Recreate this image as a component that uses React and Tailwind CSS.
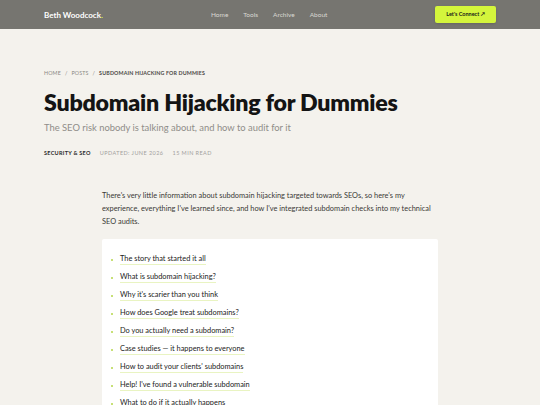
import React from "react";

const toc = [
  "The story that started it all",
  "What is subdomain hijacking?",
  "Why it's scarier than you think",
  "How does Google treat subdomains?",
  "Do you actually need a subdomain?",
  "Case studies — it happens to everyone",
  "How to audit your clients' subdomains",
  "Help! I've found a vulnerable subdomain",
  "What to do if it actually happens",
];

export default function App() {
  return (
    <div className="h-[405px] overflow-hidden bg-[#f4f2ed] text-[#1a1a1a]" style={{ fontFamily: "Lato, 'Noto Sans', sans-serif" }}>
      <header className="flex h-[29px] items-center bg-[#767570] px-[44px]">
        <div className="w-[156px] text-[8px] font-bold text-white">
          Beth Woodcock<span className="text-[#d6f542]">.</span>
        </div>
        <nav className="flex flex-1 gap-[15px] pl-[11px] text-[6.5px] text-[#d9d8d3]">
          <span>Home</span>
          <span>Tools</span>
          <span>Archive</span>
          <span>About</span>
        </nav>
        <button className="h-[17px] w-[61px] rounded-[2px] bg-[#d4f53c] text-[5.5px] font-bold text-[#1a1a1a] shadow-sm">
          Let's Connect ↗
        </button>
      </header>

      <main className="px-[44px] pt-[41px]">
        <div className="flex gap-[4px] text-[5.3px] uppercase tracking-[0.03em] text-[#8a8884]">
          <span>Home</span>
          <span>/</span>
          <span>Posts</span>
          <span>/</span>
          <span className="font-bold text-[#4a4946]">Subdomain Hijacking for Dummies</span>
        </div>
        <h1 className="mt-[9px] text-[23.2px] font-extrabold leading-[30px] tracking-[-0.01em] text-[#141414]">
          Subdomain Hijacking for Dummies
        </h1>
        <p className="mt-[4px] text-[9.4px] text-[#8f8d89]">
          The SEO risk nobody is talking about, and how to audit for it
        </p>
        <div className="mt-[14px] flex gap-[9px] text-[5.5px] uppercase tracking-[0.05em]">
          <span className="font-bold text-[#2a2a2a]">Security &amp; SEO</span>
          <span className="text-[#a3a19d] tracking-[0.08em]">Updated: June 2026</span>
          <span className="text-[#a3a19d] tracking-[0.08em]">15 min read</span>
        </div>

        <div className="ml-[58px] mt-[32px] w-[336px]">
          <p className="text-[7.4px] leading-[13px] text-[#3a3936]">
            There's very little information about subdomain hijacking targeted towards SEOs, so here's my
            experience, everything I've learned since, and how I've integrated subdomain checks into my technical
            SEO audits.
          </p>
          <div className="mt-[11px] rounded-[2px] bg-white px-[9px] pt-[15px] pb-[10px]">
            <ul className="flex flex-col gap-[7px]">
              {toc.map((t) => (
                <li key={t} className="flex items-center gap-[7px] text-[7.4px] leading-[10px] text-[#222]">
                  <span className="h-[2px] w-[2px] rounded-full bg-[#b5d64a]" />
                  <span className="border-b border-[#e9f4c2]">{t}</span>
                </li>
              ))}
            </ul>
          </div>
        </div>
      </main>
    </div>
  );
}
